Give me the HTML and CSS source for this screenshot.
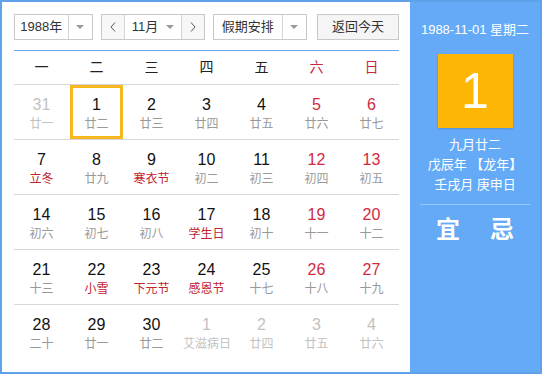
FILE: index.html
```html
<!DOCTYPE html>
<html lang="zh-CN">
<head>
    <meta charset="UTF-8">
    <title>万年历</title>
    <link rel="stylesheet" href="styles.css">
</head>
<body>

<div class="calendar">
    <div class="main">
        <!-- 顶部选择栏 -->
        <div class="toolbar">
            <div class="select year-select">
                <span class="label">1988年</span>
                <span class="arrow"><i class="tri"></i></span>
            </div>
            <div class="select month-select">
                <span class="nav"><svg width="6" height="10" viewBox="0 0 6 10"><polyline points="5,0.5 1,5 5,9.5" fill="none" stroke="#555" stroke-width="1"/></svg></span>
                <span class="month">11月<i class="tri"></i></span>
                <span class="nav"><svg width="6" height="10" viewBox="0 0 6 10"><polyline points="1,0.5 5,5 1,9.5" fill="none" stroke="#555" stroke-width="1"/></svg></span>
            </div>
            <div class="select holiday-select">
                <span class="label">假期安排</span>
                <span class="arrow"><i class="tri"></i></span>
            </div>
            <div class="today-btn">返回今天</div>
        </div>

        <div class="weekdays">
            <span>一</span><span>二</span><span>三</span><span>四</span><span>五</span>
            <span class="weekend">六</span><span class="weekend">日</span>
        </div>

        <div class="week">
            <div class="day other"><b>31</b><em>廿一</em></div>
            <div class="day selected"><b>1</b><em>廿二</em></div>
            <div class="day"><b>2</b><em>廿三</em></div>
            <div class="day"><b>3</b><em>廿四</em></div>
            <div class="day"><b>4</b><em>廿五</em></div>
            <div class="day weekend"><b>5</b><em>廿六</em></div>
            <div class="day weekend"><b>6</b><em>廿七</em></div>
        </div>
        <div class="week">
            <div class="day"><b>7</b><em class="fest">立冬</em></div>
            <div class="day"><b>8</b><em>廿九</em></div>
            <div class="day"><b>9</b><em class="fest">寒衣节</em></div>
            <div class="day"><b>10</b><em>初二</em></div>
            <div class="day"><b>11</b><em>初三</em></div>
            <div class="day weekend"><b>12</b><em>初四</em></div>
            <div class="day weekend"><b>13</b><em>初五</em></div>
        </div>
        <div class="week">
            <div class="day"><b>14</b><em>初六</em></div>
            <div class="day"><b>15</b><em>初七</em></div>
            <div class="day"><b>16</b><em>初八</em></div>
            <div class="day"><b>17</b><em class="fest">学生日</em></div>
            <div class="day"><b>18</b><em>初十</em></div>
            <div class="day weekend"><b>19</b><em>十一</em></div>
            <div class="day weekend"><b>20</b><em>十二</em></div>
        </div>
        <div class="week">
            <div class="day"><b>21</b><em>十三</em></div>
            <div class="day"><b>22</b><em class="fest">小雪</em></div>
            <div class="day"><b>23</b><em class="fest">下元节</em></div>
            <div class="day"><b>24</b><em class="fest">感恩节</em></div>
            <div class="day"><b>25</b><em>十七</em></div>
            <div class="day weekend"><b>26</b><em>十八</em></div>
            <div class="day weekend"><b>27</b><em>十九</em></div>
        </div>
        <div class="week">
            <div class="day"><b>28</b><em>二十</em></div>
            <div class="day"><b>29</b><em>廿一</em></div>
            <div class="day"><b>30</b><em>廿二</em></div>
            <div class="day other"><b>1</b><em>艾滋病日</em></div>
            <div class="day other"><b>2</b><em>廿四</em></div>
            <div class="day other"><b>3</b><em>廿五</em></div>
            <div class="day other"><b>4</b><em>廿六</em></div>
        </div>
    </div>

    <!-- 右侧当天信息 -->
    <div class="side">
        <div class="side-date">1988-11-01 星期二</div>
        <div class="big-day">1</div>
        <div class="lunar">
            <div>九月廿二</div>
            <div>戊辰年 【龙年】</div>
            <div>壬戌月 庚申日</div>
        </div>
        <div class="side-line"></div>
        <div class="yiji"><span>宜</span><span>忌</span></div>
    </div>
</div>

</body>
</html>
```

FILE: styles.css
```css
body {
    margin: 0;
    font-family: "Liberation Sans", "Noto Sans CJK SC", sans-serif;
    background: #fff;
}
.calendar {
    width: 542px;
    height: 374px;
    box-sizing: border-box;
    border: 2px solid #60a2ea;
    display: flex;
}
.main {
    width: 408px;
    box-sizing: border-box;
    padding: 12px 11px 0 12px;
    background: #fff;
}
.toolbar {
    display: flex;
    height: 26px;
    font-size: 13px;
    color: #333;
}
.select {
    display: flex;
    height: 26px;
    box-sizing: border-box;
    border: 1px solid #c9c9c9;
    background: #fff;
    line-height: 24px;
}
.select .label {
    text-align: center;
    border-right: 1px solid #d4d4d4;
}
.select .arrow {
    width: 24px;
    display: flex;
    align-items: center;
    justify-content: center;
}
.tri {
    display: inline-block;
    width: 0;
    height: 0;
    border-left: 4px solid transparent;
    border-right: 4px solid transparent;
    border-top: 4px solid #999;
}
.year-select {
    width: 79px;
}
.year-select .label {
    width: 54px;
}
.month-select {
    width: 104px;
    margin-left: 8px;
}
.month-select .nav {
    width: 22px;
    display: flex;
    align-items: center;
    justify-content: center;
    background: #f7f7f7;
}
.month-select .month {
    flex: 1;
    display: flex;
    align-items: center;
    justify-content: center;
    border-left: 1px solid #d4d4d4;
    border-right: 1px solid #d4d4d4;
}
.month-select .month .tri {
    margin-left: 8px;
}
.holiday-select {
    width: 94px;
    margin-left: 8px;
}
.holiday-select .label {
    width: 69px;
}
.today-btn {
    width: 82px;
    height: 26px;
    box-sizing: border-box;
    margin-left: 10px;
    border: 1px solid #c9c9c9;
    background: #f5f5f5;
    text-align: center;
    line-height: 24px;
}
.weekdays {
    margin-top: 10px;
    border-top: 1px solid #6ba7ea;
    height: 33px;
    display: grid;
    grid-template-columns: repeat(7, 55px);
    font-size: 14px;
    line-height: 33px;
    color: #222;
    text-align: center;
}
.weekdays .weekend {
    color: #c8283c;
}
.week {
    display: grid;
    grid-template-columns: repeat(7, 55px);
    border-top: 1px solid #d6d6d6;
    height: 55px;
    box-sizing: border-box;
}
.day {
    width: 53px;
    height: 54px;
    box-sizing: border-box;
    margin: 0 auto;
    border: 3px solid transparent;
    padding-top: 7px;
    text-align: center;
}
.day b {
    display: block;
    font-weight: normal;
    font-family: "Liberation Sans", Arial, sans-serif;
    font-size: 16px;
    line-height: 20px;
    color: #111;
}
.day em {
    display: block;
    font-style: normal;
    font-size: 12px;
    line-height: 18px;
    color: #999;
    white-space: nowrap;
}
.day em.fest {
    color: #c0242f;
}
.day.weekend b {
    color: #d2293f;
}
.day.other b,
.day.other em {
    color: #c2c2c2;
}
.day.selected {
    border-color: #f6b71f;
}
.side {
    width: 130px;
    background: #64aaf7;
    color: #fff;
    text-align: center;
}
.side-date {
    padding-top: 18px;
    font-size: 13px;
    line-height: 20px;
}
.big-day {
    width: 75px;
    height: 74px;
    margin: 14px auto 0;
    background: #fdb603;
    font-family: "Liberation Sans", Arial, sans-serif;
    font-size: 50px;
    line-height: 74px;
    box-shadow: 0 1px 2px rgba(0, 0, 0, 0.15);
}
.lunar {
    margin-top: 7px;
    font-size: 13px;
    line-height: 20px;
}
.side-line {
    width: 110px;
    height: 1px;
    margin: 9px auto 0;
    background: rgba(255, 255, 255, 0.35);
}
.yiji {
    margin-top: 10px;
    display: flex;
    justify-content: center;
    font-size: 24px;
    font-weight: bold;
    line-height: 30px;
}
.yiji span {
    width: 54px;
}
```
